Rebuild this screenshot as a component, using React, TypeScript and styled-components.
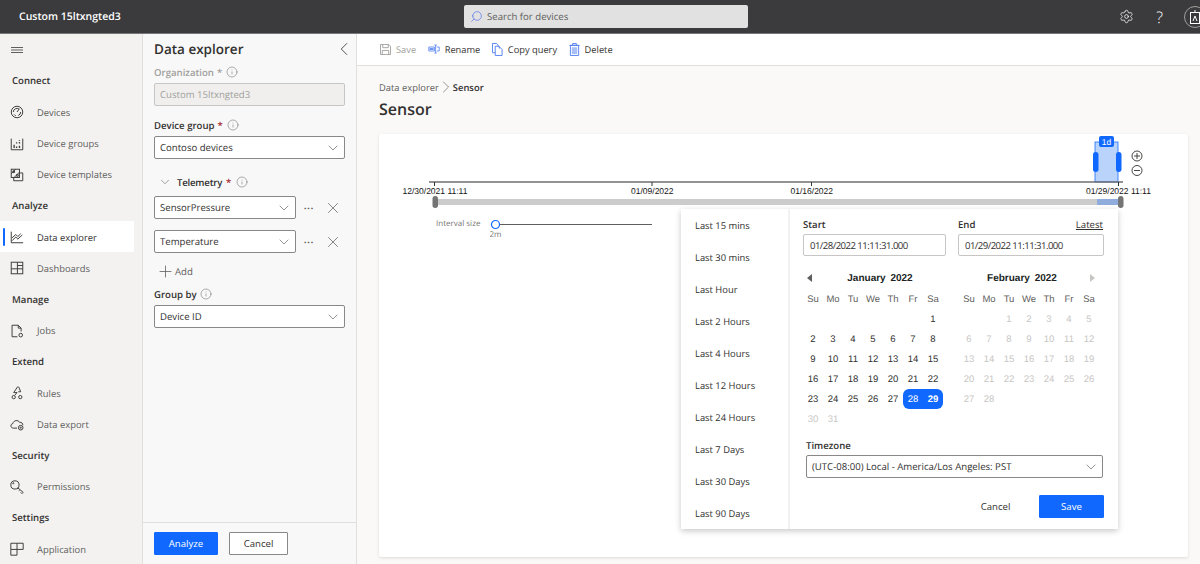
import { FC, ReactNode } from 'react';
import styled, { createGlobalStyle } from 'styled-components';
import { Search, Settings, ChevronDown, ChevronLeft, ChevronRight, X, Plus, Info } from 'lucide-react';

const GlobalStyle = createGlobalStyle`
  html, body {
    margin: 0;
    padding: 0;
    height: 100%;
    overflow: hidden;
    font-family: "Open Sans", "Noto Sans", sans-serif;
    text-rendering: geometricPrecision;
    color: #323130;
  }
  * { box-sizing: border-box; }
`;

const blue = '#1068fe';

const Page = styled.div`
  width: 1200px;
  height: 564px;
  display: grid;
  grid-template-rows: 34px 1fr;
  overflow: hidden;
`;

const TopBar = styled.header`
  display: grid;
  grid-template-columns: 464px 284px 1fr;
  align-items: center;
  background: #3b3a3c;
  border-bottom: 1px solid #77767a;
  color: #fff;
  overflow: hidden;
`;

const Brand = styled.div`
  padding-left: 19px;
  font-size: 10.5px;
  font-weight: 600;
`;

const SearchBox = styled.div`
  height: 23px;
  display: flex;
  align-items: center;
  gap: 4px;
  padding-left: 6px;
  background: #e1e1e1;
  border-radius: 2px;
  font-size: 9.6px;
  color: #605e5c;
`;

const TopIcons = styled.div`
  display: flex;
  align-items: center;
  justify-content: flex-end;
  gap: 22px;
  margin-right: -6px;
`;

const HelpGlyph = styled.span`
  font-size: 16px;
  font-weight: 300;
  line-height: 1;
`;

const Avatar = styled.div`
  width: 22px;
  height: 22px;
  border-radius: 50%;
  border: 1px solid #a19f9d;
  display: flex;
  align-items: center;
  justify-content: center;
  margin-left: -1px;
`;

const Body = styled.div`
  display: grid;
  grid-template-columns: 143px 214px 1fr;
  min-height: 0;
`;

const Nav = styled.nav`
  background: #f3f2f1;
  border-right: 1px solid #e1dfdd;
  display: grid;
  grid-auto-rows: 31.2px;
  align-content: start;
  font-size: 9.4px;
`;

const Burger = styled.div`
  display: flex;
  align-items: center;
  padding-left: 11px;
`;

const NavHeading = styled.div`
  display: flex;
  align-items: center;
  padding-left: 12px;
  font-size: 9.6px;
  font-weight: 600;
  color: #323130;
`;

const NavRow = styled.div<{ $active?: boolean }>`
  position: relative;
  display: grid;
  grid-template-columns: 27px 1fr;
  align-items: center;
  padding: 1px 0 0 10px;
  width: 134px;
  background: ${p => (p.$active ? '#fff' : 'transparent')};
  color: ${p => (p.$active ? '#323130' : '#605e5c')};

  &::before {
    content: '';
    display: ${p => (p.$active ? 'block' : 'none')};
    position: absolute;
    left: 3px;
    top: 7px;
    bottom: 6px;
    width: 2px;
    border-radius: 1px;
    background: ${blue};
  }
`;

const Panel = styled.aside`
  background: #f8f8f8;
  border-right: 1px solid #e1dfdd;
  display: flex;
  flex-direction: column;
  min-height: 0;
`;

const PanelBody = styled.div`
  flex: 1;
  padding: 0 11px;
`;

const PanelHead = styled.div`
  height: 32px;
  padding-bottom: 2px;
  display: flex;
  align-items: center;
  justify-content: space-between;
  font-size: 13.5px;
  font-weight: 600;
  color: #323130;

  svg {
    margin-right: -10px;
  }
`;

const Label = styled.div<{ $muted?: boolean; $mt?: number; $mb?: number }>`
  display: flex;
  align-items: center;
  gap: 3px;
  height: 12px;
  margin-top: ${p => p.$mt ?? 0}px;
  margin-bottom: ${p => p.$mb ?? 5}px;
  font-size: 9.6px;
  font-weight: 600;
  color: ${p => (p.$muted ? '#a19f9d' : '#323130')};

  b {
    color: ${p => (p.$muted ? '#a19f9d' : '#a4262c')};
    font-weight: 600;
    margin-right: 1px;
  }
`;

const Field = styled.div<{ $disabled?: boolean; $width?: number }>`
  width: ${p => p.$width ?? 191}px;
  height: 23px;
  display: flex;
  align-items: center;
  justify-content: space-between;
  padding: 0 3px 0 5px;
  border: 1px solid ${p => (p.$disabled ? '#c8c6c4' : '#8a8886')};
  border-radius: 2px;
  background: ${p => (p.$disabled ? '#f0efee' : '#fff')};
  color: ${p => (p.$disabled ? '#a19f9d' : '#323130')};
  font-size: 9.6px;
`;

const TelemetryHead = styled(Label)`
  padding-left: 4px;
  gap: 4px;
  margin-top: 17px;
  margin-bottom: 8px;
`;

const TelemetryName = styled.span`
  margin-left: 1px;
  letter-spacing: -0.2px;
`;

const TelemetryRow = styled.div`
  display: grid;
  grid-template-columns: 142px 25px 24px;
  align-items: center;
  justify-items: center;
  height: 23px;
  margin-bottom: 11px;
  color: #605e5c;
  font-size: 13px;
`;

const AddRow = styled.div`
  display: flex;
  align-items: center;
  height: 16px;
  margin: -1px 0 9px 2px;
  font-size: 9.6px;
  color: #605e5c;
`;

const PanelFoot = styled.div`
  height: 42px;
  display: flex;
  align-items: center;
  gap: 11px;
  padding: 0 11px;
  border-top: 1px solid #e1dfdd;
`;

const Button = styled.button<{ $primary?: boolean; $ghost?: boolean; $width: number }>`
  width: ${p => p.$width}px;
  height: 23px;
  padding: 0;
  border-radius: 1px;
  font-family: inherit;
  font-size: 9.6px;
  border: 1px solid ${p => (p.$primary ? blue : p.$ghost ? 'transparent' : '#8a8886')};
  background: ${p => (p.$primary ? blue : p.$ghost ? 'transparent' : '#fff')};
  color: ${p => (p.$primary ? '#fff' : '#323130')};
`;

const Main = styled.main`
  background: #faf9f8;
  display: flex;
  flex-direction: column;
  min-width: 0;
`;

const Toolbar = styled.div`
  height: 32px;
  flex: none;
  display: flex;
  align-items: center;
  padding: 0 0 1px 23px;
  gap: 11.5px;
  background: #fff;
  border-bottom: 1px solid #e1dfdd;
`;

const ToolItem = styled.div<{ $disabled?: boolean }>`
  display: flex;
  align-items: center;
  gap: 5px;
  font-size: 9.3px;
  color: ${p => (p.$disabled ? '#a19f9d' : '#323130')};
`;

const Crumbs = styled.div`
  display: flex;
  align-items: center;
  margin: 14px 0 0 22px;
  height: 14px;
  font-size: 9.4px;
  color: #605e5c;

  svg {
    margin: 0 -3px;
  }

  strong {
    font-weight: 600;
    color: #323130;
  }
`;

const Title = styled.h1`
  margin: 3px 0 0 22px;
  height: 24px;
  font-size: 16px;
  line-height: 24px;
  font-weight: 600;
  color: #323130;
`;

const Card = styled.section`
  position: relative;
  margin: 13px 12px 0 22px;
  height: 423px;
  background: #fff;
  border-radius: 2px;
  box-shadow: 0 1px 3px rgba(0, 0, 0, 0.12);
`;

const Timeline = styled.svg`
  display: block;
  width: 809px;
  height: 80px;
  font-family: "Liberation Sans", Arial, sans-serif;
`;

const IntervalRow = styled.div`
  display: flex;
  align-items: flex-start;
  margin: 4px 0 0 57px;
  font-size: 8px;
  color: #797775;
`;

const IntervalLabel = styled.span`
  width: 54px;
  line-height: 12px;
`;

const Popover = styled.div`
  position: absolute;
  left: 302px;
  top: 75px;
  width: 437px;
  height: 320px;
  display: grid;
  grid-template-columns: 109px 1fr;
  background: #fff;
  box-shadow: 0 2px 6px rgba(0, 0, 0, 0.22);
`;

const Presets = styled.ul`
  list-style: none;
  margin: 0;
  padding: 0 0 0 14px;
  display: grid;
  grid-auto-rows: 32px;
  align-items: center;
  border-right: 2px solid #f3f2f1;
  font-size: 9.4px;
  color: #323130;
`;

const Picker = styled.div`
  padding: 9px 15px 0 13px;
`;

const DateFields = styled.div`
  display: grid;
  grid-template-columns: 143px 146px;
  column-gap: 12px;
`;

const DateHead = styled.div`
  display: flex;
  justify-content: space-between;
  height: 15px;
  margin-bottom: 1px;
  font-size: 9.6px;
  font-weight: 600;

  a {
    font-weight: 400;
    text-decoration: underline;
    color: #323130;
    margin-right: 1px;
  }
`;

const DateInput = styled.div`
  height: 22px;
  display: flex;
  align-items: center;
  padding-left: 6px;
  border: 1px solid #c8c6c4;
  border-radius: 2px;
  font-size: 9.6px;
  letter-spacing: -0.55px;
  color: #323130;
`;

const Months = styled.div`
  display: grid;
  grid-template-columns: 140px 140px;
  column-gap: 16px;
  margin-top: 12px;
`;

const MonthHead = styled.div<{ $side: 'left' | 'right' }>`
  display: grid;
  grid-template-columns: ${p => (p.$side === 'left' ? '14px 1fr' : '1fr 14px')};
  align-items: center;
  justify-items: center;
  height: 20px;
  font-family: "Liberation Sans", Arial, sans-serif;
  font-size: 10px;
  font-weight: 700;
  word-spacing: 2px;
  color: #201f1e;
`;

const DayGrid = styled.div`
  display: grid;
  grid-template-columns: repeat(7, 20px);
  grid-template-rows: 19px;
  grid-auto-rows: 20px;
  margin-top: 2px;
  font-family: "Liberation Sans", Arial, sans-serif;
  font-size: 9.5px;
`;

const Weekday = styled.span`
  display: flex;
  align-items: center;
  justify-content: center;
  color: #605e5c;
`;

const Day = styled.span<{ $muted?: boolean; $edge?: 'start' | 'end' }>`
  display: flex;
  align-items: center;
  justify-content: center;
  color: ${p => (p.$edge ? '#fff' : p.$muted ? '#c8c6c4' : '#323130')};
  font-weight: ${p => (p.$edge === 'end' ? 700 : 400)};
  background: ${p => (p.$edge ? blue : 'transparent')};
  border-radius: ${p => (p.$edge === 'start' ? '6px 0 0 6px' : p.$edge === 'end' ? '0 6px 6px 0' : '0')};
`;

const ZoneLabel = styled.div`
  margin: 10px 0 2px 3px;
  height: 14px;
  font-size: 9.6px;
  font-weight: 600;
`;

const ZoneField = styled(Field)`
  width: 297px;
  margin-left: 3px;
`;

const PickerFoot = styled.div`
  display: flex;
  justify-content: flex-end;
  align-items: center;
  gap: 11px;
  margin-top: 17px;
`;

const PanelIcon = styled.svg`
  width: 14px;
  height: 14px;
  fill: none;
  stroke: #3f3e3d;
  stroke-width: 1.2;
`;

const BarIcon = styled.svg<{ $color?: string; $w?: number; $h?: number }>`
  width: ${p => p.$w ?? 12}px;
  height: ${p => p.$h ?? 12}px;
  fill: none;
  stroke: ${p => p.$color ?? '#4f7df0'};
  stroke-width: 1;
`;

type NavItem = { label: string; icon: ReactNode } | { heading: string };

const icons = {
  devices: <><circle cx="8.500" cy="8.500" r="7" /><path d="M8.500 8.500 L11.500 4.500 M4 8.500 a4.500 4.500 0 0 1 7 -3.600 M13 8.500 a4.500 4.500 0 0 1 -3 4.200 M7 13 a4.500 4.500 0 0 1 -2 -1.500" /></>,
  groups: <><path d="M1.500 2 V15.500 H15.500 V2" /><path d="M5 13.500 v-4 M8 13.500 v-2 M8 8 v-1.500 M11.500 13.500 v-3 M11.500 8 v-2 M11.500 4.500 v-1" strokeWidth="1.6" /></>,
  templates: <><rect x="1.500" y="1.500" width="10" height="10" /><path d="M1.500 7 L7 1.500 M5 11.500 L11.500 5 M3.500 3.500 h2 v2 h-2 Z M8 8 h2 v2 h-2 Z" /><path d="M11.500 6 H15.500 V15.500 H4.500 V11.500" /></>,
  explorer: <><path d="M1.500 2 V15.500 H16" /><path d="M2.500 13 L7 8.500 L9.500 11 L15 6" /><path d="M2.500 9.500 L7 5.500 L9.500 8 L13 4.500" /></>,
  dashboards: <><rect x="1.500" y="1.500" width="14" height="14" /><path d="M1.500 9.500 H15.500 M9 1.500 V15.500" /><path d="M9 5.500 H15.500" /></>,
  jobs: <><path d="M9 15.500 H2.500 V1.500 H10 L13.500 5 V9" /><path d="M10 1.500 V5 H13.500" /><circle cx="13" cy="13.500" r="2.200" /></>,
  rules: <><path d="M9.500 .5 L4.500 8 H8.500 L6 11" /><path d="M10.500 1 L13 7 L10 7" /><circle cx="4.500" cy="13.500" r="2" /><circle cx="12.500" cy="13.500" r="2" /></>,
  dataExport: <><path d="M8.500 13.500 H4 C.5 13.500 0 8.500 3.500 8 C4 4 10 3 11.500 6.500 C14 6 16 8 15.500 10" /><circle cx="13" cy="13" r="2.800" /><circle cx="13" cy="13" r=".8" /></>,
  permissions: <><circle cx="6" cy="6" r="5" /><path d="M9.500 9.500 L16 15 L14.500 16.500 L13 15 M11.500 12.500 L10.500 13.500 M9.500 9.500 L9 11" /><circle cx="4" cy="4" r=".7" /></>,
  application: <><path d="M1 1.500 H16 V9 H1 Z M8.500 1.500 V16 H1 V9" /></>
};

const navItems: NavItem[] = [
  { heading: 'Connect' },
  { label: 'Devices', icon: icons.devices },
  { label: 'Device groups', icon: icons.groups },
  { label: 'Device templates', icon: icons.templates },
  { heading: 'Analyze' },
  { label: 'Data explorer', icon: icons.explorer },
  { label: 'Dashboards', icon: icons.dashboards },
  { heading: 'Manage' },
  { label: 'Jobs', icon: icons.jobs },
  { heading: 'Extend' },
  { label: 'Rules', icon: icons.rules },
  { label: 'Data export', icon: icons.dataExport },
  { heading: 'Security' },
  { label: 'Permissions', icon: icons.permissions },
  { heading: 'Settings' },
  { label: 'Application', icon: icons.application }
];

const presets = ['Last 15 mins', 'Last 30 mins', 'Last Hour', 'Last 2 Hours', 'Last 4 Hours', 'Last 12 Hours', 'Last 24 Hours', 'Last 7 Days', 'Last 30 Days', 'Last 90 Days'];
const weekdays = ['Su', 'Mo', 'Tu', 'We', 'Th', 'Fr', 'Sa'];

const Select: FC<{ value: string; width?: number; disabled?: boolean }> = ({ value, width, disabled }) => (
  <Field $width={width} $disabled={disabled}>
    {value}
    {!disabled && <ChevronDown size={16} strokeWidth={1} color="#605e5c" />}
  </Field>
);

const InfoIcon = () => <Info size={12} strokeWidth={1} color="#605e5c" />;

type MonthProps = {
  name: string;
  blanks: number;
  days: number;
  side: 'left' | 'right';
  muted: (d: number) => boolean;
  edge?: (d: number) => 'start' | 'end' | undefined;
};

const Month: FC<MonthProps> = ({ name, blanks, days, side, muted, edge }) => (
  <div>
    <MonthHead $side={side}>
      {side === 'left' && <svg width="6" height="8" viewBox="0 0 6 8"><path d="M5 0 V8 L0 4 Z" fill="#605e5c" /></svg>}
      <span>{name}</span>
      {side === 'right' && <svg width="6" height="8" viewBox="0 0 6 8"><path d="M1 0 V8 L6 4 Z" fill="#c8c6c4" /></svg>}
    </MonthHead>
    <DayGrid>
      {weekdays.map(w => <Weekday key={w}>{w}</Weekday>)}
      {Array.from({ length: blanks }, (_, i) => <span key={`b${i}`} />)}
      {Array.from({ length: days }, (_, i) => i + 1).map(d => (
        <Day key={d} $muted={muted(d)} $edge={edge?.(d)}>{d}</Day>
      ))}
    </DayGrid>
  </div>
);

export default function App() {
  return <Page>
    <GlobalStyle />
    <TopBar>
      <Brand>Custom 15ltxngted3</Brand>
      <SearchBox>
        <Search size={13} strokeWidth={1.2} color="#4f6bed" style={{ transform: 'scaleX(-1)' }} />
        Search for devices
      </SearchBox>
      <TopIcons>
        <Settings size={15} strokeWidth={1.2} />
        <HelpGlyph>?</HelpGlyph>
        <Avatar>
          <svg width="12" height="14" viewBox="0 0 12 14" fill="none" stroke="#fff"><rect x="1.500" y="2.500" width="9" height="11" /><path d="M4 11 L6 6 L8 11 M5 1 H7" /></svg>
        </Avatar>
      </TopIcons>
    </TopBar>
    <Body>
      <Nav>
        <Burger>
          <svg width="14" height="8" viewBox="0 0 14 8" stroke="#605e5c"><path d="M0 1.500 H12 M0 4 H12 M0 6.500 H12" /></svg>
        </Burger>
        {navItems.map(item => 'heading' in item
          ? <NavHeading key={item.heading}>{item.heading}</NavHeading>
          : <NavRow key={item.label} $active={item.label === 'Data explorer'}>
            <PanelIcon viewBox="0 0 17 17">{item.icon}</PanelIcon>
            {item.label}
          </NavRow>
        )}
      </Nav>
      <Panel>
        <PanelBody>
          <PanelHead>
            Data explorer
            <ChevronLeft size={22} strokeWidth={0.9} />
          </PanelHead>
          <Label $muted>Organization <b>*</b> <InfoIcon /></Label>
          <Select value="Custom 15ltxngted3" disabled />
          <Label $mt={13}>Device group <b>*</b> <InfoIcon /></Label>
          <Select value="Contoso devices" />
          <TelemetryHead>
            <ChevronDown size={14} strokeWidth={1} color="#605e5c" />
            <TelemetryName>Telemetry</TelemetryName> <b>*</b> <InfoIcon />
          </TelemetryHead>
          <TelemetryRow>
            <Select value="SensorPressure" width={142} />
            <span>···</span>
            <X size={18} strokeWidth={1} />
          </TelemetryRow>
          <TelemetryRow>
            <Select value="Temperature" width={142} />
            <span>···</span>
            <X size={18} strokeWidth={1} />
          </TelemetryRow>
          <AddRow><Plus size={19} strokeWidth={1} /> Add</AddRow>
          <Label>Group by <InfoIcon /></Label>
          <Select value="Device ID" />
        </PanelBody>
        <PanelFoot>
          <Button $primary $width={64}>Analyze</Button>
          <Button $width={59}>Cancel</Button>
        </PanelFoot>
      </Panel>
      <Main>
        <Toolbar>
          <ToolItem $disabled>
            <BarIcon viewBox="0 0 12 12" $color="#a19f9d" $w={11} $h={11}><path d="M.5 .5 H9.500 L11.500 2.500 V11.500 H.5 Z M3 .5 V4 H9 V.5 M2.500 11.500 V7 H9.500 V11.500" /></BarIcon>
            Save
          </ToolItem>
          <ToolItem>
            <BarIcon viewBox="0 0 15 12"><path d="M1 3.500 H8 V8.500 H1 Z M9.500 1 V11 M8 1 H11 M8 11 H11 M11 3.500 H14 V8.500 H11" /><path d="M2 6 H7" strokeWidth="2" /></BarIcon>
            Rename
          </ToolItem>
          <ToolItem>
            <BarIcon viewBox="0 0 12 14" $w={11} $h={13}><path d="M3.500 10.500 H.5 V.5 H5 L8 4 V6" /><path d="M3.500 3.500 H7.500 L11 7 V13.500 H3.500 Z" /></BarIcon>
            Copy query
          </ToolItem>
          <ToolItem>
            <BarIcon viewBox="0 0 12 14" $w={11} $h={13}><path d="M1.500 2.500 H10.500 V13.500 H1.500 Z M.5 2.500 H11.500 M4 2.500 V.5 H8 V2.500" /><path d="M3 4.500 H9 V12 H3 Z" fill="#a9c0f5" stroke="none" /></BarIcon>
            Delete
          </ToolItem>
        </Toolbar>
        <Crumbs>Data explorer <ChevronRight size={20} strokeWidth={0.8} /> <strong>Sensor</strong></Crumbs>
        <Title>Sensor</Title>
        <Card>
          <Timeline viewBox="379 134 809 80">
            <rect x="1095" y="142" width="23" height="40" fill="#b9d3fb" stroke="#1a6fff" strokeWidth="0.8" />
            <rect x="1099" y="136" width="15" height="11" rx="2" fill={blue} />
            <text x="1106.500" y="145" fontSize="8.5" fill="#fff" textAnchor="middle">1d</text>
            <rect x="1093" y="152" width="5.5" height="20" rx="2.7" fill={blue} />
            <rect x="1116" y="152" width="5.5" height="20" rx="2.7" fill={blue} />
            <g fill="none" stroke="#323130" strokeWidth="0.9">
              <circle cx="1137" cy="156" r="5" />
              <path d="M1134 156 H1140 M1137 153 V159" />
              <circle cx="1137" cy="170.500" r="5" />
              <path d="M1134 170.500 H1140" />
            </g>
            <path d="M429 182 H1123" stroke="#6e6e6e" strokeWidth="1.3" />
            <path d="M434.500 182 V186 M652 182 V186 M811.500 182 V186 M1118.500 182 V186" stroke="#333" />
            <g fontSize="8.5" fill="#111">
              <text x="402.500" y="194">12/30/2021 11:11</text>
              <text x="631" y="194">01/09/2022</text>
              <text x="790.500" y="194">01/16/2022</text>
              <text x="1086" y="194">01/29/2022 11:11</text>
            </g>
            <rect x="436" y="199" width="684" height="6" fill="#cccccc" />
            <rect x="1097" y="199" width="23" height="6" fill="#90acdc" />
            <rect x="432.500" y="196" width="5.5" height="12" rx="2.7" fill="#757575" />
            <rect x="1118" y="196" width="5.5" height="12" rx="2.7" fill="#757575" />
          </Timeline>
          <IntervalRow>
            <IntervalLabel>Interval size</IntervalLabel>
            <svg width="165" height="22" viewBox="0 0 165 22">
              <path d="M9 6.500 H162" stroke="#605e5c" />
              <circle cx="5.500" cy="6.500" r="4" fill="#fff" stroke={blue} strokeWidth="1.2" />
              <text x="5.500" y="19" fontSize="8" fill="#797775" textAnchor="middle">2m</text>
            </svg>
          </IntervalRow>
          <Popover>
            <Presets>
              {presets.map(p => <li key={p}>{p}</li>)}
            </Presets>
            <Picker>
              <DateFields>
                <div>
                  <DateHead>Start</DateHead>
                  <DateInput>01/28/2022 11:11:31.000</DateInput>
                </div>
                <div>
                  <DateHead>End <a>Latest</a></DateHead>
                  <DateInput>01/29/2022 11:11:31.000</DateInput>
                </div>
              </DateFields>
              <Months>
                <Month name="January 2022" blanks={6} days={31} side="left" muted={d => d > 29} edge={d => (d === 28 ? 'start' : d === 29 ? 'end' : undefined)} />
                <Month name="February 2022" blanks={2} days={28} side="right" muted={() => true} />
              </Months>
              <ZoneLabel>Timezone</ZoneLabel>
              <ZoneField>
                (UTC-08:00) Local - America/Los Angeles: PST
                <ChevronDown size={16} strokeWidth={1} color="#605e5c" />
              </ZoneField>
              <PickerFoot>
                <Button $ghost $width={65}>Cancel</Button>
                <Button $primary $width={65}>Save</Button>
              </PickerFoot>
            </Picker>
          </Popover>
        </Card>
      </Main>
    </Body>
  </Page>;
}
